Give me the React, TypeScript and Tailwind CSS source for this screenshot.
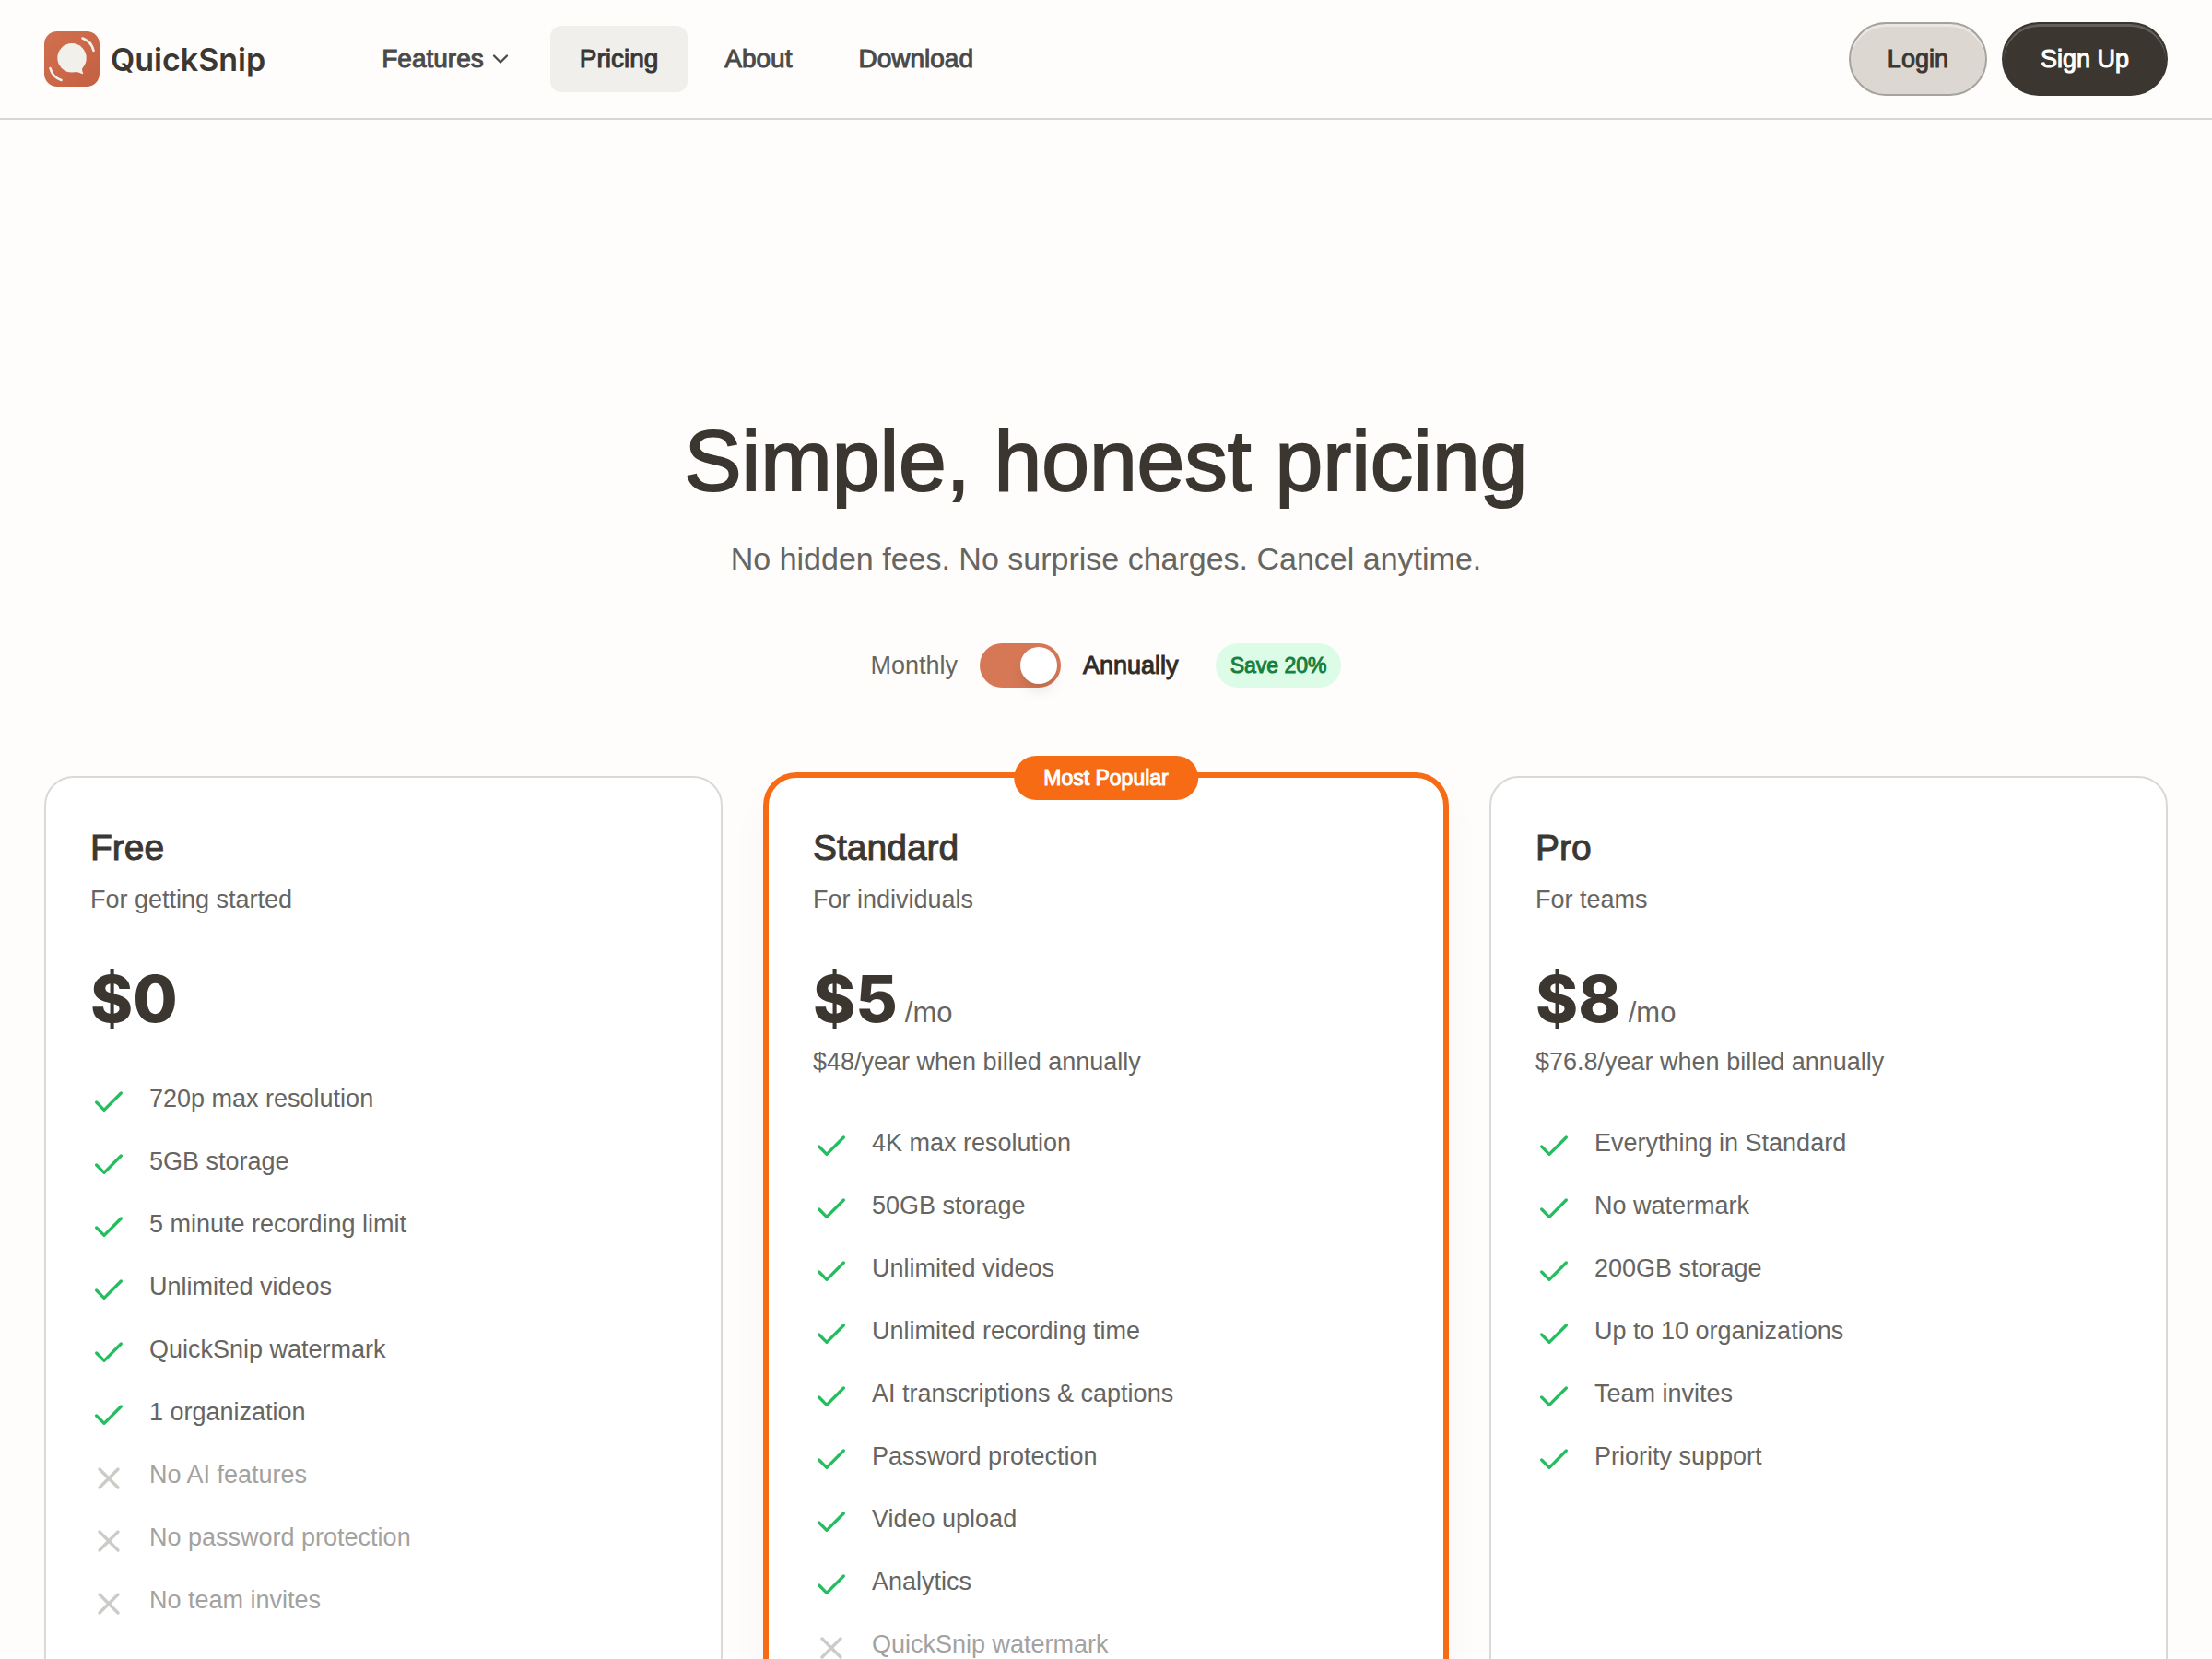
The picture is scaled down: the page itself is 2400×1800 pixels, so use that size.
import React, { useState } from 'react';
import { Check, ChevronDown, X } from 'lucide-react';

interface Feature {
  label: string;
  included: boolean;
}

interface Plan {
  name: string;
  tagline: string;
  monthly: number;
  annual: number;
  billed?: string;
  popular?: boolean;
  features: Feature[];
}

const plans: Plan[] = [
  {
    name: 'Free',
    tagline: 'For getting started',
    monthly: 0,
    annual: 0,
    features: [
      { label: '720p max resolution', included: true },
      { label: '5GB storage', included: true },
      { label: '5 minute recording limit', included: true },
      { label: 'Unlimited videos', included: true },
      { label: 'QuickSnip watermark', included: true },
      { label: '1 organization', included: true },
      { label: 'No AI features', included: false },
      { label: 'No password protection', included: false },
      { label: 'No team invites', included: false },
    ],
  },
  {
    name: 'Standard',
    tagline: 'For individuals',
    monthly: 5,
    annual: 5,
    billed: '$48/year when billed annually',
    popular: true,
    features: [
      { label: '4K max resolution', included: true },
      { label: '50GB storage', included: true },
      { label: 'Unlimited videos', included: true },
      { label: 'Unlimited recording time', included: true },
      { label: 'AI transcriptions & captions', included: true },
      { label: 'Password protection', included: true },
      { label: 'Video upload', included: true },
      { label: 'Analytics', included: true },
      { label: 'QuickSnip watermark', included: false },
    ],
  },
  {
    name: 'Pro',
    tagline: 'For teams',
    monthly: 8,
    annual: 8,
    billed: '$76.8/year when billed annually',
    features: [
      { label: 'Everything in Standard', included: true },
      { label: 'No watermark', included: true },
      { label: '200GB storage', included: true },
      { label: 'Up to 10 organizations', included: true },
      { label: 'Team invites', included: true },
      { label: 'Priority support', included: true },
    ],
  },
];

function Logo() {
  return (
    <svg viewBox="0 0 60 60" className="size-15" aria-hidden="true">
      <defs>
        <linearGradient id="logo-fill" x1="0" y1="0" x2="1" y2="1">
          <stop offset="0" stopColor="#d0704f" />
          <stop offset="1" stopColor="#c56042" />
        </linearGradient>
      </defs>
      <rect width="60" height="60" rx="14" fill="url(#logo-fill)" />
      <circle cx="30" cy="28.8" r="15.7" fill="#f2f0eb" />
      <path d="M45.5 31C44.8 35 43 38 41.2 40c-.3 2 .2 3.800.9 5.200.3.700-.2 1.100-.9.900-2.200-.7-4.400-1.700-7.200-2.300z" fill="#f2f0eb" />
      <path d="M41.5 7.5C47.5 9.5 52 14.5 53.5 21" fill="none" stroke="#f2f0eb" strokeWidth="2.6" strokeLinecap="round" />
      <path d="M6.5 40C8 46 12.5 51 18.5 53" fill="none" stroke="#f2f0eb" strokeWidth="2.6" strokeLinecap="round" />
    </svg>
  );
}

function Header() {
  return (
    <header className="flex items-center justify-between border-b-2 border-[#d6d6d4] px-12 py-6">
      <div className="flex items-center gap-[94px]">
        <a href="#" className="flex items-center gap-3 font-[Inter,sans-serif] text-[34px] font-semibold text-[#3b3733]">
          <Logo />
          QuickSnip
        </a>
        <nav className="flex items-center gap-2 text-[28px] leading-10 text-[#4a4a48] [-webkit-text-stroke:1px]">
          <button type="button" className="flex items-center gap-1 rounded-xl px-8 py-4">
            Features
            <ChevronDown className="size-7" strokeWidth={2} />
          </button>
          <a href="#" className="rounded-xl bg-[#f0efec] px-8 py-4 text-[#3b3733]">Pricing</a>
          <a href="#" className="rounded-xl px-8 py-4">About</a>
          <a href="#" className="rounded-xl px-8 py-4">Download</a>
        </nav>
      </div>
      <div className="flex items-center gap-4 text-[27px] [-webkit-text-stroke:1px]">
        <button
          type="button"
          className="h-20 rounded-full border-2 border-[#a5a39e] bg-[#dcd8d1] px-10 text-[#3b3733] shadow-[inset_0_3px_0_rgba(255,255,255,0.4)]"
        >
          Login
        </button>
        <button
          type="button"
          className="h-20 rounded-full border-2 border-[#3b3630] bg-[#3b3630] px-10 text-white shadow-[inset_0_3px_0_rgba(255,255,255,0.2)]"
        >
          Sign Up
        </button>
      </div>
    </header>
  );
}

function PlanCard({ plan, annual }: { plan: Plan; annual: boolean }) {
  const price = annual ? plan.annual : plan.monthly;

  return (
    <article
      className={`relative rounded-4xl border-2 bg-white p-12 ${
        plan.popular
          ? 'border-[#f76b15] ring-4 ring-[#f76b15] shadow-[0_24px_48px_rgba(0,0,0,0.04)]'
          : 'border-[#d9d9d6]'
      }`}
    >
      {plan.popular && (
        <span className="absolute -top-6 left-1/2 -translate-x-1/2 rounded-full bg-[#f76b15] px-8 py-2 text-[23px] leading-8 whitespace-nowrap text-white [-webkit-text-stroke:1px]">
          Most Popular
        </span>
      )}
      <h2 className="text-[39px] leading-14 text-[#3b3733] [-webkit-text-stroke:1px]">{plan.name}</h2>
      <p className="mt-2 text-[27px] leading-10">{plan.tagline}</p>
      <p className="mt-12 flex items-baseline gap-2 text-[31px] leading-10">
        <span className="font-[Inter,sans-serif] text-[70px] leading-20 font-extrabold text-[#3b3630]">${price}</span>
        {price > 0 && <span>/mo</span>}
      </p>
      {plan.billed && <p className="mt-2 text-[27px] leading-10">{plan.billed}</p>}
      <ul className="mt-12 flex flex-col gap-6 text-[27px] leading-10">
        {plan.features.map((feature) => (
          <li key={feature.label} className={`flex items-start gap-6 ${feature.included ? '' : 'text-[#a3a29f]'}`}>
            {feature.included ? (
              <Check className="mt-1 size-10 text-[#25bd60]" strokeWidth={2} />
            ) : (
              <X className="mt-1 size-10 text-[#cccbc8]" strokeWidth={2} />
            )}
            <span>{feature.label}</span>
          </li>
        ))}
      </ul>
    </article>
  );
}

export default function App() {
  const [annual, setAnnual] = useState(true);

  return (
    <div className="min-h-screen bg-[#fefdfb] font-['Liberation_Sans',Arial,sans-serif] text-[#666562]">
      <Header />
      <main className="px-12 pt-80 pb-24">
        <div className="text-center">
          <h1 className="text-[93px] leading-25 text-[#3b3630] [-webkit-text-stroke:2px]">Simple, honest pricing</h1>
          <p className="mt-7 text-[34px] leading-14">No hidden fees. No surprise charges. Cancel anytime.</p>
        </div>
        <div className="mt-16 flex items-center justify-center gap-6 text-[27px]">
          <span>Monthly</span>
          <label className="flex h-12 w-22 cursor-pointer items-center rounded-full bg-[#d67856] p-1 has-checked:justify-end">
            <input
              type="checkbox"
              role="switch"
              aria-label="Bill annually"
              checked={annual}
              onChange={(e) => setAnnual(e.target.checked)}
              className="size-10 cursor-pointer appearance-none rounded-full bg-white shadow-lg"
            />
          </label>
          <span className="text-[#2f2d2a] [-webkit-text-stroke:1px]">Annually</span>
          <span className="ml-4 rounded-full bg-[#dcfce7] px-4 py-2 text-[23px] leading-8 text-[#15803d] [-webkit-text-stroke:1px]">
            Save 20%
          </span>
        </div>
        <div className="mt-24 grid grid-cols-3 gap-12">
          {plans.map((plan) => (
            <PlanCard key={plan.name} plan={plan} annual={annual} />
          ))}
        </div>
      </main>
    </div>
  );
}
